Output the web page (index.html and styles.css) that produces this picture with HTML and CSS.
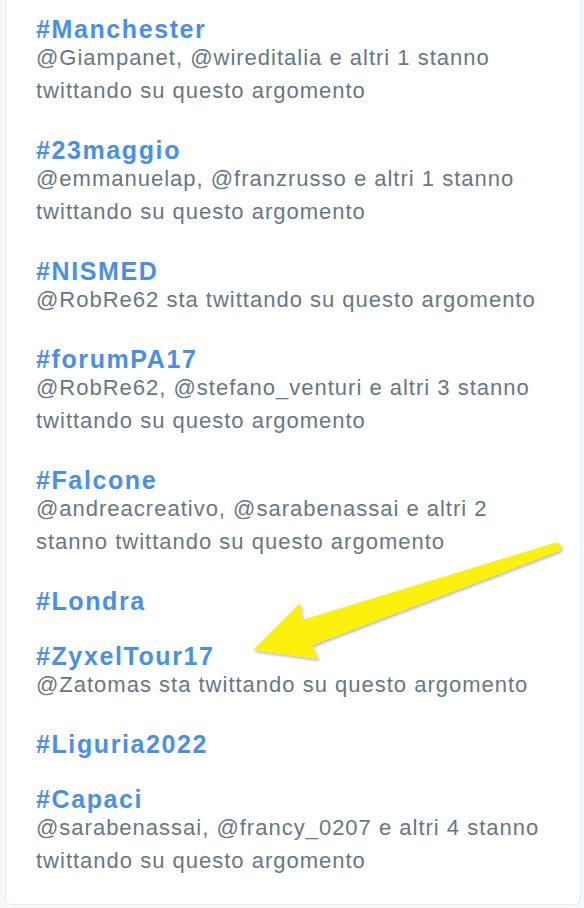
FILE: index.html
```html
<!DOCTYPE html>
<html lang="it">
<head>
<meta charset="utf-8">
<title>Tendenze</title>
<link rel="stylesheet" href="styles.css">
</head>
<body>
<div class="card">
  <ul class="trends">
    <li class="trend"><a class="tag">#Manchester</a><p class="meta">@Giampanet, @wireditalia e altri 1 stanno twittando su questo argomento</p></li>
    <li class="trend"><a class="tag">#23maggio</a><p class="meta">@emmanuelap, @franzrusso e altri 1 stanno twittando su questo argomento</p></li>
    <li class="trend"><a class="tag">#NISMED</a><p class="meta">@RobRe62 sta twittando su questo argomento</p></li>
    <li class="trend"><a class="tag">#forumPA17</a><p class="meta">@RobRe62, @stefano_venturi e altri 3 stanno twittando su questo argomento</p></li>
    <li class="trend"><a class="tag">#Falcone</a><p class="meta">@andreacreativo, @sarabenassai e altri 2 stanno twittando su questo argomento</p></li>
    <li class="trend"><a class="tag">#Londra</a></li>
    <li class="trend"><a class="tag">#ZyxelTour17</a><p class="meta">@Zatomas sta twittando su questo argomento</p></li>
    <li class="trend"><a class="tag">#Liguria2022</a></li>
    <li class="trend"><a class="tag">#Capaci</a><p class="meta">@sarabenassai, @francy_0207 e altri 4 stanno twittando su questo argomento</p></li>
  </ul>
</div>
<svg class="arrow" width="584" height="908" viewBox="0 0 584 908" aria-hidden="true">
  <defs>
    <filter id="sh" x="-10%" y="-10%" width="130%" height="130%">
      <feDropShadow dx="1.5" dy="2" stdDeviation="1.5" flood-color="#000" flood-opacity="0.28"/>
    </filter>
  </defs>
  <path filter="url(#sh)" fill="#fbf10a" d="M253 650 L300 603 L302 620 L554 543 Q560 542 561 547 Q561 551 556 552 L312 645 L318 659 Z"/>
</svg>
</body>
</html>
```
FILE: styles.css
```css
html, body {
  margin: 0;
  padding: 0;
}
body {
  background: #f5f8fa;
  font-family: "Liberation Sans", Arial, Helvetica, sans-serif;
  width: 584px;
  height: 908px;
  overflow: hidden;
  position: relative;
}
.card {
  margin: 0 3px 0 5px;
  background: #fff;
  border: 1px solid #e6ecf0;
  border-top: none;
  border-radius: 0 0 6px 6px;
  padding: 1px 40px 12px 30px;
}
.trends {
  list-style: none;
  margin: 0;
  padding: 0;
}
.trend {
  padding: 16px 0 15px;
}
.tag {
  display: block;
  color: #4a8fe7;
  font-weight: bold;
  font-size: 25px;
  line-height: 24px;
  letter-spacing: 1.6px;
}
.meta {
  margin: 0;
  color: #657786;
  font-size: 22px;
  line-height: 33px;
  letter-spacing: 1px;
}
.arrow {
  position: absolute;
  left: 0;
  top: 0;
  pointer-events: none;
}
```
